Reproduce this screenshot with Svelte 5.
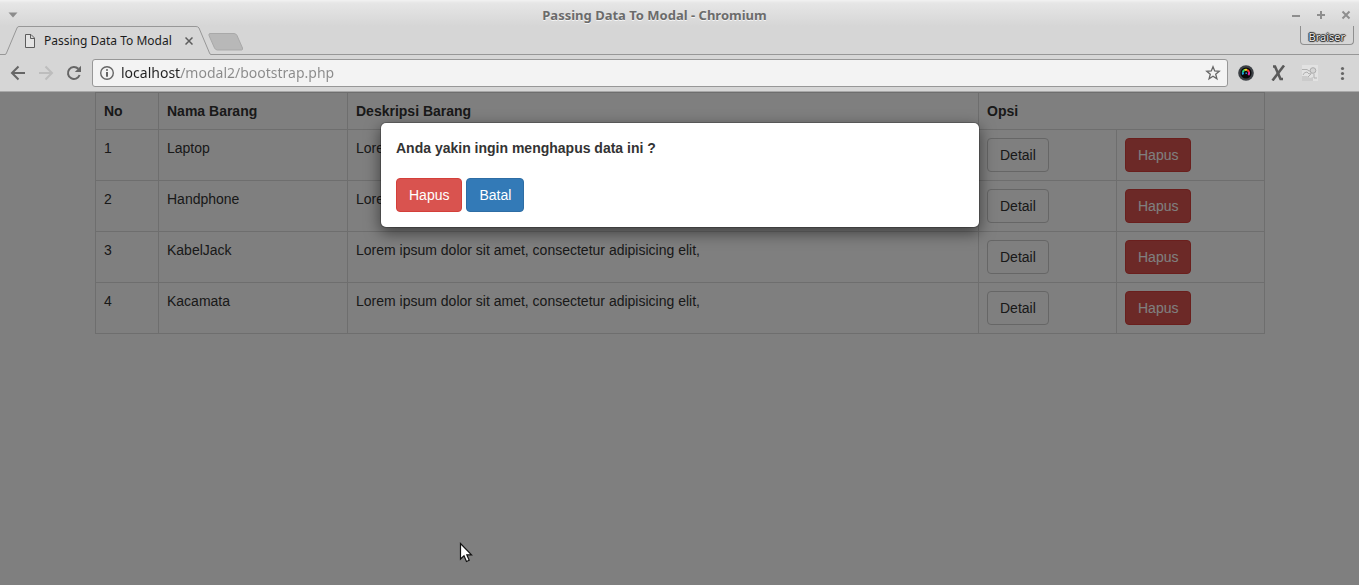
<script>
  const items = [
    { no: 1, name: 'Laptop' },
    { no: 2, name: 'Handphone' },
    { no: 3, name: 'KabelJack' },
    { no: 4, name: 'Kacamata' },
  ]
  const description = 'Lorem ipsum dolor sit amet, consectetur adipisicing elit,'

  let open = $state(true)
  let url = $state('localhost/modal2/bootstrap.php')
</script>

<div class="window">
  <header class="chrome">
    <div class="titlebar">
      <button class="bare menu-arrow" aria-label="Window menu">
        <svg width="10" height="6" viewBox="0 0 10 6"><path d="M0.5 0.5h9L5 5.5z" fill="#8c8c8c" /></svg>
      </button>
      <span class="title">Passing Data To Modal - Chromium</span>
      <div class="window-controls">
        <button class="bare" aria-label="Minimize">
          <svg width="10" height="10" viewBox="0 0 10 10"><path d="M1 6h8" /></svg>
        </button>
        <button class="bare" aria-label="Maximize">
          <svg width="10" height="10" viewBox="0 0 10 10"><path d="M1 5h8M5 1v8" /></svg>
        </button>
        <button class="bare" aria-label="Close">
          <svg width="10" height="10" viewBox="0 0 10 10"><path d="M1.5 1.5l7 7M8.5 1.5l-7 7" /></svg>
        </button>
      </div>
    </div>

    <div class="tabstrip">
      <div class="tab">
        <svg class="tab-shape" width="206" height="29" viewBox="0 0 206 29">
          <path d="M0 28.5L1 28 12 2Q12.5 0.5 14 0.5H191Q193 0.5 194 2L205 28 206 28.5V29H0z" fill="#d6d6d6" />
          <path d="M0 28.5Q1 28.5 1.5 27L12 2Q12.5 0.5 14 0.5H191Q193 0.5 194 2L204.5 27Q205 28.5 206 28.5" fill="none" stroke="#979797" />
        </svg>
        <svg class="page-icon" width="12" height="14" viewBox="0 0 12 14">
          <path d="M1.5 0.5H7L10.5 4v9.500h-9zM6.500 0.500V4.500H10.500" fill="#e4e4e4" stroke="#5c5c5c" />
        </svg>
        <span class="tab-title">Passing Data To Modal</span>
        <button class="bare tab-close" aria-label="Close tab">
          <svg width="8" height="8" viewBox="0 0 8 8"><path d="M0.5 0.5l7 7M7.5 0.5l-7 7" stroke="#5c5c5c" stroke-width="1.5" /></svg>
        </button>
      </div>
      <button class="bare new-tab" aria-label="New tab">
        <svg width="36" height="18" viewBox="0 0 36 18">
          <path d="M2 0.5H26Q28 0.5 29 2.5L34.5 15Q35 17 33.5 17H9.5Q7.5 17 6.5 15L1 2.5Q0.5 0.5 2 0.5z" fill="#b8b8b8" stroke="#a9a9a9" />
        </svg>
      </button>
      <button class="profile">Braiser</button>
    </div>

    <div class="toolbar">
      <button class="bare nav" aria-label="Back">
        <svg width="16" height="16" viewBox="0 0 16 16"><path d="M15 8H2.5M8.5 1.500L2 8l6.500 6.500" fill="none" stroke="#666" stroke-width="2" /></svg>
      </button>
      <button class="bare nav" aria-label="Forward">
        <svg width="16" height="16" viewBox="0 0 16 16"><path d="M1 8h12.500M7.500 1.500L14 8l-6.500 6.500" fill="none" stroke="#bdbdbd" stroke-width="2" /></svg>
      </button>
      <button class="bare nav" aria-label="Reload">
        <svg width="16" height="16" viewBox="0 0 16 16">
          <path d="M13.600 10A6 6 0 1 1 12.300 3.800" fill="none" stroke="#666" stroke-width="2" />
          <path d="M15 0.800V7H8.800z" fill="#666" />
        </svg>
      </button>
      <div class="omnibox">
        <svg width="16" height="16" viewBox="0 0 16 16">
          <circle cx="8" cy="8" r="6.300" fill="none" stroke="#666" stroke-width="1.400" />
          <path d="M8 4.200v1.600M8 7v4.800" stroke="#555" stroke-width="1.800" />
        </svg>
        <input class="url" type="text" aria-label="Address" bind:value={url} />
        <button class="bare" aria-label="Bookmark this page">
          <svg width="16" height="16" viewBox="0 0 16 16">
            <path d="M8 1.800l1.700 4.200 4.500 0.300-3.500 2.900 1.200 4.500L8 11.200l-3.900 2.500 1.200-4.500L1.800 6.300l4.500-0.300z" fill="none" stroke="#666" stroke-width="1.300" />
          </svg>
        </button>
      </div>
      <div class="extensions">
        <button class="bare" aria-label="Colour picker">
          <svg width="16" height="16" viewBox="0 0 16 16">
            <circle cx="8" cy="8" r="7.800" fill="#3c4045" />
            <circle cx="8" cy="8" r="5.500" fill="#08080a" />
            <g fill="none" stroke-width="2">
              <path d="M5.200 9.500A3.200 3.200 0 0 1 4.900 7.200" stroke="#1ea6e8" />
              <path d="M4.900 7.200A3.200 3.200 0 0 1 6.400 5.200" stroke="#24d67a" />
              <path d="M6.400 5.200A3.200 3.200 0 0 1 9 5" stroke="#e6e526" />
              <path d="M9 5A3.200 3.200 0 0 1 11 7" stroke="#ef3b2c" />
              <path d="M11 7A3.200 3.200 0 0 1 10.300 10" stroke="#e32ba5" />
            </g>
            <path d="M7.500 7.500h1.500v1.500h-1.500z" fill="#1d8fd0" />
          </svg>
        </button>
        <button class="bare" aria-label="X extension">
          <svg width="16" height="16" viewBox="0 0 16 16">
            <path d="M3 1.500H5L10.500 14H13" fill="none" stroke="#5a5a5a" stroke-width="2.600" />
            <path d="M14 0.500L2.500 15.500" stroke="#5a5a5a" stroke-width="2.600" />
          </svg>
        </button>
        <button class="bare" aria-label="Disabled extension">
          <svg width="16" height="16" viewBox="0 0 16 16">
            <path d="M0 0h16v16H0z" fill="#e2e2e2" />
            <path d="M0 4h5v1H0zM0 11h5l3 2 3-1v4H0z" fill="#cbcbcb" />
            <path d="M0 4.500h5l2 1.500h2M1 10q1-3 4-3l2 2 2-1M9.500 8.500L6 12M12 9v4h3" fill="none" stroke="#b0b0b0" />
            <circle cx="11" cy="5.500" r="2.800" fill="#d4d4d4" stroke="#ababab" />
          </svg>
        </button>
        <button class="bare" aria-label="Menu">
          <svg width="16" height="16" viewBox="0 0 16 16" fill="#666">
            <circle cx="8.500" cy="3.500" r="1.600" /><circle cx="8.500" cy="8.500" r="1.600" /><circle cx="8.500" cy="13.500" r="1.600" />
          </svg>
        </button>
      </div>
    </div>
  </header>

  <main class="page">
    <div class="container">
      <table>
        <colgroup>
          <col class="col-no" />
          <col class="col-name" />
          <col />
          <col class="col-detail" />
          <col class="col-delete" />
        </colgroup>
        <thead>
          <tr>
            <th>No</th>
            <th>Nama Barang</th>
            <th>Deskripsi Barang</th>
            <th colspan="2">Opsi</th>
          </tr>
        </thead>
        <tbody>
          {#each items as item (item.no)}
            <tr>
              <td>{item.no}</td>
              <td>{item.name}</td>
              <td>{description}</td>
              <td><button class="btn btn-default">Detail</button></td>
              <td><button class="btn btn-danger" onclick={() => (open = true)}>Hapus</button></td>
            </tr>
          {/each}
        </tbody>
      </table>
    </div>

    {#if open}
      <div class="backdrop">
        <div class="modal" role="dialog" aria-modal="true" aria-labelledby="modal-text">
          <p class="modal-text" id="modal-text">Anda yakin ingin menghapus data ini ?</p>
          <div class="modal-actions">
            <button class="btn btn-danger" onclick={() => (open = false)}>Hapus</button>
            <button class="btn btn-primary" onclick={() => (open = false)}>Batal</button>
          </div>
        </div>
      </div>
    {/if}

    <svg class="cursor" width="14" height="22" viewBox="0 0 14 22">
      <path d="M1.500 1.500V17l3.500-3.300L7.500 19.500l2.700-1.200L7.800 12.800H12.500z" fill="#fff" stroke="#111" stroke-width="1.200" />
    </svg>
  </main>
</div>

<style>
  :global(body) {
    margin: 0;
  }

  .window {
    display: flex;
    flex-direction: column;
    min-height: 100vh;
  }

  .window :global(*) {
    box-sizing: border-box;
  }

  .window svg {
    display: block;
    flex-shrink: 0;
  }

  .bare {
    display: block;
    padding: 0;
    border: 0;
    background: none;
  }

  /* browser frame */
  .chrome {
    font-family: "Noto Sans", sans-serif;
    background: linear-gradient(#f2f2f2, #e6e6e6 3px, #d6d6d6 26px);
    border-bottom: 1px solid #a8a8a8;
  }

  .titlebar {
    display: grid;
    grid-template-columns: 60px 1fr 60px;
    align-items: center;
    height: 26px;
    padding: 3px 8px 0;
  }

  .title {
    padding-right: 50px;
    text-align: center;
    font-size: 13px;
    line-height: 20px;
    font-weight: 700;
    color: #6b6b6b;
    text-shadow: 0 1px 0 #f4f4f4;
  }

  .window-controls {
    display: flex;
    justify-content: space-between;
  }

  .window-controls path {
    stroke: #8e8e8e;
    stroke-width: 2;
  }

  .tabstrip {
    display: flex;
    align-items: flex-start;
    height: 29px;
    padding: 0 5px;
    border-bottom: 1px solid #979797;
  }

  .tab {
    position: relative;
    display: flex;
    align-items: center;
    width: 206px;
    height: 29px;
    padding: 0 18px 0 19px;
  }

  .tab-shape {
    position: absolute;
    top: 0;
    left: 0;
  }

  .page-icon,
  .tab-title,
  .tab-close {
    position: relative;
  }

  .tab-title {
    flex: 1;
    margin-left: 8px;
    font-size: 12px;
    line-height: 16px;
    color: #1c1c1c;
    white-space: nowrap;
  }

  .new-tab {
    margin-top: 7px;
    margin-left: -3px;
  }

  .profile {
    height: 19px;
    margin-left: auto;
    padding: 3px 8px 0;
    border: 1px solid #8f8f8f;
    border-top: 0;
    border-radius: 0 0 4px 4px;
    background: none;
    font-family: "Noto Sans", sans-serif;
    font-size: 11px;
    line-height: 16px;
    color: #e8e8e8;
    text-shadow: 0 0 1px #222, 1px 0 1px #222, -1px 0 1px #222, 0 1px 1px #222, 0 -1px 1px #222;
  }

  .toolbar {
    display: flex;
    align-items: center;
    gap: 12px;
    height: 36px;
    padding: 0 9px 0 10px;
  }

  .omnibox {
    display: flex;
    flex: 1;
    align-items: center;
    gap: 6px;
    height: 28px;
    margin-left: -2px;
    padding: 0 6px;
    border: 1px solid #979797;
    border-radius: 3px;
    background: #f3f3f3;
  }

  /* the host is dark, the rest of the address is grey */
  .url {
    flex: 1;
    min-width: 0;
    height: 24px;
    padding: 0;
    border: 0;
    outline: 0;
    font-family: "Noto Sans", sans-serif;
    font-size: 14px;
    line-height: 24px;
    color: #222;
    background: linear-gradient(90deg, #222 60px, #8a8a8a 60px);
    background-clip: text;
    -webkit-text-fill-color: transparent;
  }

  .extensions {
    display: flex;
    gap: 16px;
    margin-left: -2px;
  }

  /* page */
  .page {
    position: relative;
    flex: 1;
    padding-left: 1px;
    background: #fff;
    font-family: "Liberation Sans", Arial, sans-serif;
    font-size: 14px;
    line-height: 20px;
    color: #333;
  }

  .container {
    max-width: 1170px;
    margin: 0 auto;
  }

  table {
    width: 100%;
    table-layout: fixed;
    border-collapse: collapse;
  }

  .col-no {
    width: 63px;
  }

  .col-name {
    width: 189px;
  }

  .col-detail {
    width: 138px;
  }

  .col-delete {
    width: 148px;
  }

  th,
  td {
    padding: 8px;
    border: 1px solid #ddd;
    text-align: left;
    vertical-align: top;
  }

  .btn {
    display: block;
    padding: 6px 12px;
    border: 1px solid transparent;
    border-radius: 4px;
    font-family: inherit;
    font-size: 14px;
    line-height: 20px;
    cursor: pointer;
  }

  .btn-default {
    color: #333;
    background: #fff;
    border-color: #ccc;
  }

  .btn-danger {
    color: #fff;
    background: #d9534f;
    border-color: #d43f3a;
  }

  .btn-primary {
    color: #fff;
    background: #337ab7;
    border-color: #2e6da4;
  }

  .backdrop {
    position: absolute;
    inset: 0;
    padding: 30px 10px 30px 11px;
    background: rgba(0, 0, 0, 0.5);
  }

  .modal {
    max-width: 600px;
    margin: 0 auto;
    padding: 15px;
    border: 1px solid rgba(0, 0, 0, 0.2);
    border-radius: 6px;
    background: #fff;
    background-clip: padding-box;
    box-shadow: 0 5px 15px rgba(0, 0, 0, 0.5);
  }

  .modal-text {
    margin: 0 0 20px;
    font-weight: 700;
  }

  .modal-actions {
    display: flex;
    gap: 4px;
  }

  .cursor {
    position: absolute;
    top: 450px;
    left: 459px;
  }
</style>
